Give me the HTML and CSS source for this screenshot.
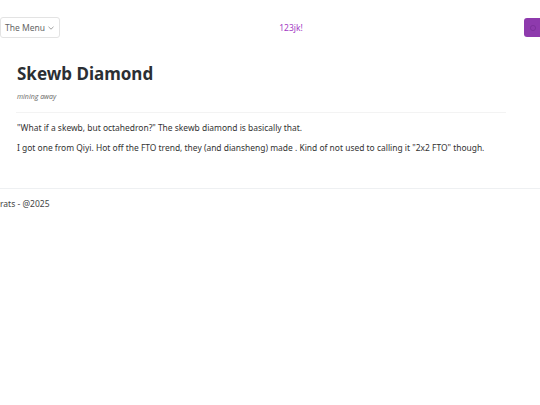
FILE: index.html
```html
<!DOCTYPE html>
<html>
<head>
<meta charset="utf-8">
<link rel="stylesheet" href="styles.css">
</head>
<body>
<header class="nav">
  <button class="menu-btn">The Menu <svg class="chev" width="6" height="4" viewBox="0 0 6 4"><path d="M0.5 0.8 L3 3.2 L5.5 0.8" fill="none" stroke="#888" stroke-width="0.8"/></svg></button>
  <a class="brand">123jk!</a>
  <div class="theme-btn"><svg width="8" height="8" viewBox="0 0 8 8"><circle cx="4" cy="4" r="2.6" fill="none" stroke="#7a2e98" stroke-width="0.8"/></svg></div>
</header>
<main class="post">
  <h1 class="title">Skewb Diamond</h1>
  <p class="sub">mining away</p>
  <hr class="sep">
  <p class="para">"What if a skewb, but octahedron?" The skewb diamond is basically that.</p>
  <p class="para">I got one from Qiyi. Hot off the FTO trend, they (and diansheng) made . Kind of not used to calling it "2x2 FTO" though.</p>
</main>
<footer class="foot">rats - @2025</footer>
</body>
</html>
```
FILE: styles.css
```css
html, body { margin: 0; padding: 0; background: #fff; }
body { font-family: "Noto Sans", "Open Sans", sans-serif; color: #2b2f33; width: 540px; }
.nav { display: flex; align-items: center; justify-content: space-between; height: 21px; padding-top: 17px; }
.menu-btn { font-family: inherit; font-size: 8.5px; color: #666; background: #fff; border: 1px solid #e3e3e3; border-radius: 3px; height: 21px; width: 60px; padding: 0 0 0 4px; display: flex; align-items: center; gap: 3px; }
.brand { font-size: 8.5px; color: #a43bc4; margin-left: -2px; }
.theme-btn { width: 18px; height: 19px; background: #8e3aad; border-radius: 3px; margin-right: -2px; display: flex; align-items: center; justify-content: center; }
.post { padding: 24px 34px 0 16px; }
.title { font-size: 17px; font-weight: 700; margin: 0 0 0 1px; line-height: 23px; color: #2b2f33; }
.sub { font-family: "Open Sans", sans-serif; font-size: 7px; font-style: italic; font-weight: 400; color: #666; margin: 7px 0 0 1px; line-height: 9px; }
.sep { border: 0; border-top: 1px solid #f3f3f3; margin: 11px 0 0 0; }
.para { font-size: 8.45px; margin: 9px 0 0 1px; color: #333; line-height: 12px; }
.para + .para { margin-top: 8px; }
.foot { margin-top: 34px; border-top: 1px solid #eef0f2; padding-top: 9px; font-size: 8.5px; color: #444; }
```
